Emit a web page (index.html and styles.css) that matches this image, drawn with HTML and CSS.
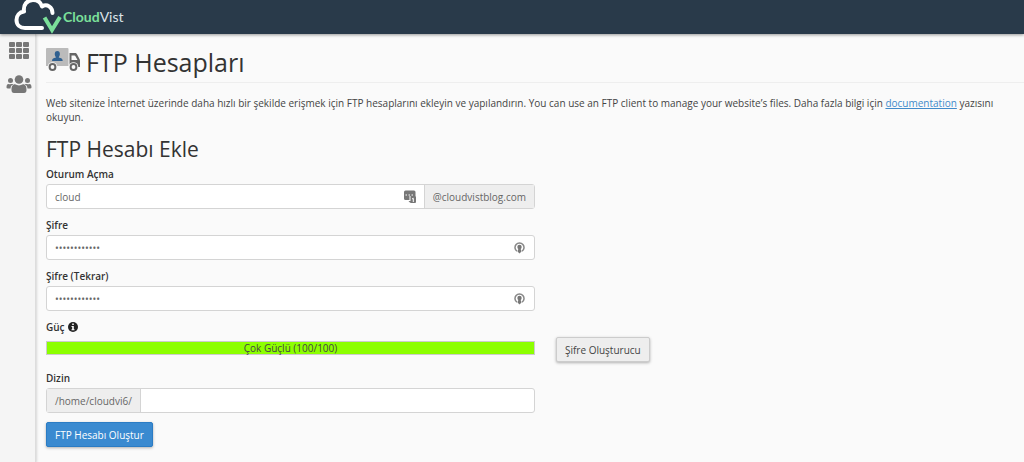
FILE: index.html
```html
<!DOCTYPE html>
<html lang="tr">
<head>
<meta charset="UTF-8">
<meta name="viewport" content="width=device-width, initial-scale=1.0">
<title>FTP Hesapları</title>
<link rel="stylesheet" href="styles.css">
</head>
<body>

<header class="navbar">
  <a href="#" class="brand" aria-label="CloudVist">
    <svg class="brand-logo" width="48" height="34" viewBox="0 0 48 34" fill="none">
      <path d="M28 28H11C6 28 2.500 25 2.500 20C2.500 15.500 5.500 12 10 11.500C9 5 13 0 19 0C24 0 27 3 28 6.500C33 3.500 38.500 7 38.500 13" stroke="#fff" stroke-width="4" stroke-linecap="round" stroke-linejoin="round"/>
      <path d="M30.500 17.500L38 30L46 17" stroke="#7be09a" stroke-width="4"/>
    </svg>
    <span class="brand-name"><b>Cloud</b>Vist</span>
  </a>
</header>

<div class="layout">
  <nav class="sidebar">
    <a href="#" aria-label="Ana Sayfa">
      <svg width="20" height="18" viewBox="0 0 20 18" fill="#777">
        <rect x="0" y="0" width="6" height="5" rx="1"/>
        <rect x="7" y="0" width="6" height="5" rx="1"/>
        <rect x="14" y="0" width="6" height="5" rx="1"/>
        <rect x="0" y="6" width="6" height="5" rx="1"/>
        <rect x="7" y="6" width="6" height="5" rx="1"/>
        <rect x="14" y="6" width="6" height="5" rx="1"/>
        <rect x="0" y="12" width="6" height="5" rx="1"/>
        <rect x="7" y="12" width="6" height="5" rx="1"/>
        <rect x="14" y="12" width="6" height="5" rx="1"/>
      </svg>
    </a>
    <a href="#" aria-label="Kullanıcı Yöneticisi">
      <svg width="26" height="18" viewBox="0 0 26 18" fill="#777">
        <circle cx="4.500" cy="5.500" r="2.500"/>
        <circle cx="21.500" cy="5.500" r="2.500"/>
        <circle cx="13" cy="4.500" r="4.300"/>
        <path d="M2.500 9C1 9 0.500 10.500 0.500 12.500Q0.500 13.500 2 13.500H4.500C4.700 11.500 5.500 10 7.500 9.300C6.500 8.800 4 9.500 2.500 9Z"/>
        <path d="M23.500 9C25 9 25.500 10.500 25.500 12.500Q25.500 13.500 24 13.500H21.500C21.300 11.500 20.500 10 18.500 9.300C19.500 8.800 22 9.500 23.500 9Z"/>
        <path d="M9 9.300Q13 11.500 17 9.300C19.500 9.300 20.500 11.500 20.500 15Q20.500 18 18 18H8Q5.500 18 5.500 15C5.500 11.500 6.500 9.300 9 9.300Z"/>
      </svg>
    </a>
  </nav>

  <main class="content">
    <h1 class="page-title">
      <svg width="35" height="28" viewBox="0 0 35 28">
        <path d="M1 0H21.500Q22.500 0 22.500 1V18H0V1Q0 0 1 0Z" fill="#bbb"/>
        <path d="M6 13C6 10.500 7.500 10 10 9.500C8 6.500 8.500 3 11.300 3C14.200 3 14.700 6.500 12.700 9.500C15.200 10 16.700 10.500 16.700 13Z" fill="#2f6090"/>
        <path fill-rule="evenodd" d="M23.500 5H29C30 5 30.500 5.500 31 6.300L33.500 11Q34 12 34 13V19H23.500ZM25.500 7.500V12H31.500L29.300 8Q29 7.500 28.500 7.500Z" fill="#666"/>
        <circle cx="6.500" cy="19" r="4.800" fill="#fafafa"/>
        <circle cx="27.500" cy="19" r="4.800" fill="#fafafa"/>
        <circle cx="6.500" cy="19" r="2.900" fill="none" stroke="#666" stroke-width="2"/>
        <circle cx="27.500" cy="19" r="2.900" fill="none" stroke="#666" stroke-width="2"/>
      </svg>
      FTP Hesapları
    </h1>

    <p class="description">Web sitenize İnternet üzerinde daha hızlı bir şekilde erişmek için FTP hesaplarını ekleyin ve yapılandırın. You can use an FTP client to manage your website’s files. Daha fazla bilgi için <a href="#">documentation</a> yazısını okuyun.</p>

    <h2 class="section-title">FTP Hesabı Ekle</h2>

    <form class="ftp-form">
      <div class="form-group">
        <label for="login">Oturum Açma</label>
        <div class="input-group">
          <input type="text" id="login" value="cloud">
          <svg class="field-icon" width="12" height="14" viewBox="0 0 12 14">
            <path d="M1.500 0.500H10Q11.500 0.500 11.500 2V6H5.500V10H1.500Q0 10 0 8.500V2Q0 0.500 1.500 0.500Z" fill="#777"/>
            <path d="M1.500 5H3M4.500 5H6M7.500 5H9" stroke="#fff" stroke-width="1"/>
            <path d="M6.500 6H11Q12 6 12 7V12Q12 13 11 13H7Q6 13 4.500 11H6.500Z" fill="#777"/>
            <path d="M8 9L9.300 8.300V12" stroke="#fff" fill="none"/>
          </svg>
          <span class="addon addon-right">@cloudvistblog.com</span>
        </div>
      </div>

      <div class="form-group">
        <label for="password">Şifre</label>
        <div class="input-group">
          <input type="password" id="password" value="cloudvist123">
          <svg class="field-icon" width="12" height="14" viewBox="0 0 12 14">
            <path d="M3 10.200A4.500 4.500 0 1 1 8 10.200" fill="none" stroke="#888" stroke-width="1.500"/>
            <circle cx="5.500" cy="6" r="2.200" fill="#777"/>
            <path d="M4.500 7.500H6.500L7.500 10.500L5.500 12.500L3.500 10.500Z" fill="#777"/>
          </svg>
        </div>
      </div>

      <div class="form-group">
        <label for="password2">Şifre (Tekrar)</label>
        <div class="input-group">
          <input type="password" id="password2" value="cloudvist123">
          <svg class="field-icon" width="12" height="14" viewBox="0 0 12 14">
            <path d="M3 10.200A4.500 4.500 0 1 1 8 10.200" fill="none" stroke="#888" stroke-width="1.500"/>
            <circle cx="5.500" cy="6" r="2.200" fill="#777"/>
            <path d="M4.500 7.500H6.500L7.500 10.500L5.500 12.500L3.500 10.500Z" fill="#777"/>
          </svg>
        </div>
      </div>

      <div class="form-group">
        <span class="label">Güç
          <svg width="10" height="14" viewBox="0 -2 10 14">
            <circle cx="5" cy="5" r="5" fill="#222"/>
            <path d="M4.200 1.500H5.800V3H4.200ZM3.500 4H5.800V7.200H6.500V8.300H3.500V7.200H4.200V5H3.500Z" fill="#fff"/>
          </svg>
        </span>
        <div class="strength-row">
          <div class="strength">Çok Güçlü (100/100)</div>
          <button type="button" class="btn btn-default">Şifre Oluşturucu</button>
        </div>
      </div>

      <div class="form-group">
        <label for="directory">Dizin</label>
        <div class="input-group">
          <span class="addon addon-left">/home/cloudvi6/</span>
          <input type="text" id="directory">
        </div>
      </div>

      <button type="submit" class="btn btn-primary">FTP Hesabı Oluştur</button>
    </form>
  </main>
</div>

</body>
</html>
```

FILE: styles.css
```css
* {
  box-sizing: border-box;
}
body {
  margin: 0;
  min-height: 100vh;
  display: flex;
  flex-direction: column;
  font-family: "Open Sans", "Noto Sans", sans-serif;
  font-size: 10px;
  line-height: 14px;
  color: #444;
  background-color: #fafafa;
}
svg {
  display: block;
  flex-shrink: 0;
}

/* Top bar */
.navbar {
  height: 34px;
  padding-left: 14px;
  background-color: #293a4a;
  box-shadow: 0 1px 3px rgba(0, 0, 0, 0.4);
  z-index: 1;
}
.brand {
  display: inline-flex;
  align-items: center;
  gap: 1px;
  text-decoration: none;
}
.brand-name {
  font-family: Lato, sans-serif;
  font-size: 14px;
  color: #dde3e8;
}
.brand-name b {
  color: #7be09a;
}

.layout {
  flex: 1;
  display: flex;
}

/* Side menu */
.sidebar {
  width: 36px;
  padding: 8px 0 0 2px;
  display: flex;
  flex-direction: column;
  align-items: center;
  gap: 15px;
  background-color: #f5f5f5;
  border-right: 1px solid #ddd;
  box-shadow: 0 0 3px rgba(0, 0, 0, 0.25);
}

/* Content */
.content {
  flex: 1;
  min-width: 0;
  padding: 12px 0 16px 10px;
}
.page-title {
  display: flex;
  align-items: center;
  gap: 5px;
  margin: 0;
  padding-bottom: 4px;
  border-bottom: 1px solid #eee;
  font-size: 25px;
  font-weight: 400;
  line-height: 32px;
  color: #333;
}
.description {
  margin: 13px 0 11px;
}
.description a {
  color: #428bca;
}
.section-title {
  margin: 0 0 4px;
  font-size: 21px;
  font-weight: 400;
  line-height: 28px;
  color: #333;
}

/* Form */
.ftp-form {
  width: 50%;
}
.form-group {
  margin-bottom: 9px;
}
.form-group label,
.form-group .label {
  display: flex;
  gap: 3px;
  height: 17px;
  font-weight: 600;
  color: #333;
}
.input-group {
  display: flex;
  align-items: center;
  height: 25px;
  background-color: #fff;
  border: 1px solid #d4d4d4;
  border-radius: 3px;
}
.input-group input {
  flex: 1;
  min-width: 0;
  padding: 0 8px;
  border: none;
  outline: none;
  background: none;
  font: inherit;
  color: #666;
}
.field-icon {
  margin-right: 8px;
}
.addon {
  align-self: stretch;
  display: flex;
  align-items: center;
  padding: 0 8px;
  background-color: #eee;
  color: #666;
}
.addon-left {
  border-right: 1px solid #d4d4d4;
}
.addon-right {
  border-left: 1px solid #d4d4d4;
}
.strength-row {
  display: flex;
  align-items: center;
  height: 25px;
}
.strength {
  flex: 0 0 100%;
  margin: 0 21px 4px 0;
  background-color: #8cff00;
  border: 1px solid #ccc;
  line-height: 12px;
  text-align: center;
}

/* Buttons */
.btn {
  flex-shrink: 0;
  height: 25px;
  padding: 0 8px;
  border: 1px solid #ccc;
  border-radius: 2px;
  box-shadow: 0 1px 3px rgba(0, 0, 0, 0.3);
  font: inherit;
  cursor: pointer;
}
.btn-default {
  background-color: #eee;
  color: #444;
}
.btn-primary {
  background-color: #3a8ad0;
  border-color: #2b7cc4;
  color: #fff;
}
```
